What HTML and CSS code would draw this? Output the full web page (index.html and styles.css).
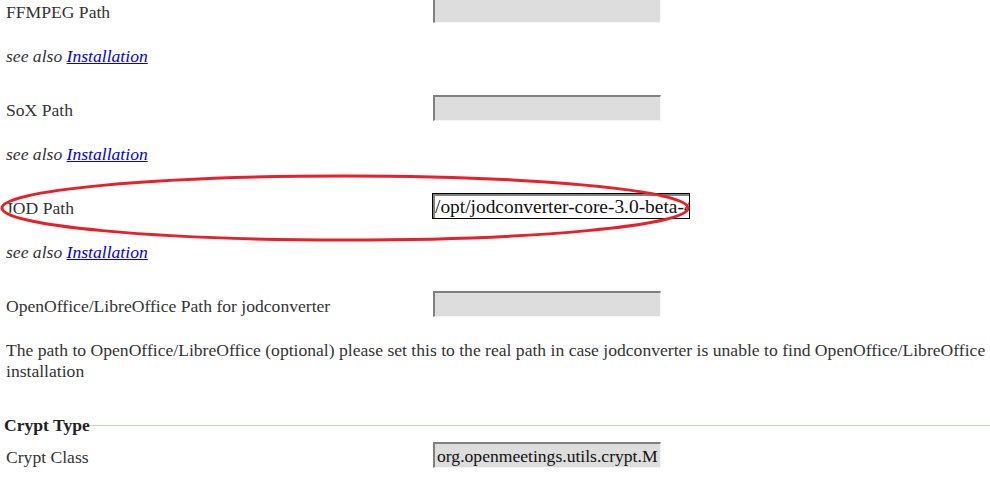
FILE: index.html
```html
<!DOCTYPE html>
<html lang="en">
  <head>
    <meta charset="UTF-8" />
    <title>Configuration</title>
    <link rel="stylesheet" href="styles.css">
  </head>
  <body>
    <div class="config">
      <div class="row first">
        <label class="label" for="ffmpeg">FFMPEG Path</label>
        <input class="field" id="ffmpeg" type="text" value="" readonly />
      </div>
      <p class="desc"><em>see also <a href="#">Installation</a></em></p>

      <div class="row">
        <label class="label" for="sox">SoX Path</label>
        <input class="field" id="sox" type="text" value="" readonly />
      </div>
      <p class="desc"><em>see also <a href="#">Installation</a></em></p>

      <div class="row marked">
        <label class="label" for="jod">JOD Path</label>
        <input class="field active" id="jod" type="text" value="/opt/jodconverter-core-3.0-beta-4" />
        <!-- red annotation circle -->
        <svg class="mark" width="694" height="70" viewBox="0 0 694 70">
          <ellipse cx="345" cy="35" rx="343" ry="32" fill="none" stroke="#e8202a" stroke-width="3" />
        </svg>
      </div>
      <p class="desc"><em>see also <a href="#">Installation</a></em></p>

      <div class="row">
        <label class="label" for="oo">OpenOffice/LibreOffice Path for jodconverter</label>
        <input class="field" id="oo" type="text" value="" readonly />
      </div>
      <p class="desc text">The path to OpenOffice/LibreOffice (optional) please set this to the real path in case jodconverter is unable to find OpenOffice/LibreOffice installation</p>

      <fieldset class="group">
        <legend>Crypt Type</legend>
        <div class="row">
          <label class="label" for="crypt">Crypt Class</label>
          <input class="field" id="crypt" type="text" value="org.openmeetings.utils.crypt.MD5Implementation" readonly />
        </div>
      </fieldset>
    </div>
  </body>
</html>
```

FILE: styles.css
```css
body, html {
    margin: 0;
    padding: 0;
    background-color: #fff;
    overflow: hidden;
    font-family: "Liberation Serif", "Times New Roman", serif;
    font-size: 17.6px;
    color: #333;
}

.config {
    padding: 0 0 0 6px;
    margin-top: -3px;
}

.row {
    display: flex;
    align-items: center;
    height: 26px;
}

.label {
    width: 427px;
    flex: none;
    padding-top: 5px;
}

.field {
    box-sizing: border-box;
    width: 228px;
    height: 26px;
    margin: 0;
    padding: 1px 2px 0 2px;
    font-family: "Liberation Serif", "Times New Roman", serif;
    font-size: 17.6px;
    color: #111;
    background-color: #ddd;
    border-style: solid;
    border-width: 2px 1px 1px 2px;
    border-color: #808080 #f6f6f6 #f6f6f6 #808080;
    outline: none;
}

.field.active {
    width: 258px;
    margin-left: -1px;
    background-color: #fff;
    border: 1px solid #000;
    box-shadow: inset 2px 2px 0 #808080;
    padding: 1px 0 0 2px;
    font-size: 19.4px;
}

.marked {
    position: relative;
    margin-top: 1px;
}

.mark {
    position: absolute;
    left: -6px;
    top: -20px;
    pointer-events: none;
}

.desc {
    margin: 23px 0 28px 0;
    line-height: 21px;
}

.desc a {
    color: #0000ee;
}

.text {
    margin-bottom: 33px;
}

.group {
    margin: 0 0 0 -2px;
    padding: 0;
    border: none;
    border-top: 1px solid #c8d8b0;
}

.group legend {
    padding: 0;
    font-weight: bold;
    color: #222;
}

.group .row {
    margin-top: 6px;
    padding-left: 2px;
}
```
